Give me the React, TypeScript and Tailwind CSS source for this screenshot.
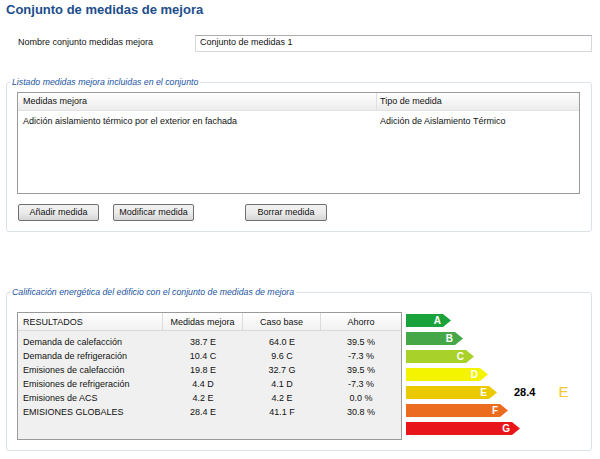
import React from 'react';

const results = [
  { name: 'Demanda de calefacción', mejora: '38.7 E', base: '64.0 E', ahorro: '39.5 %' },
  { name: 'Demanda de refrigeración', mejora: '10.4 C', base: '9.6 C', ahorro: '-7.3 %' },
  { name: 'Emisiones de calefacción', mejora: '19.8 E', base: '32.7 G', ahorro: '39.5 %' },
  { name: 'Emisiones de refrigeración', mejora: '4.4 D', base: '4.1 D', ahorro: '-7.3 %' },
  { name: 'Emisiones de ACS', mejora: '4.2 E', base: '4.2 E', ahorro: '0.0 %' },
  { name: 'EMISIONES GLOBALES', mejora: '28.4 E', base: '41.1 F', ahorro: '30.8 %' },
];

const bars = [
  { letter: 'A', width: 'w-[45px]', color: 'bg-[#1ba33b]' },
  { letter: 'B', width: 'w-[57px]', color: 'bg-[#45a748]' },
  { letter: 'C', width: 'w-[68px]', color: 'bg-[#a8d22a]' },
  { letter: 'D', width: 'w-[82px]', color: 'bg-[#f4f300]' },
  { letter: 'E', width: 'w-[91px]', color: 'bg-[#ebc900]' },
  { letter: 'F', width: 'w-[102px]', color: 'bg-[#ec6c1f]' },
  { letter: 'G', width: 'w-[114px]', color: 'bg-[#e8151b]' },
];

const WinButton: React.FC<{ label: string; className?: string }> = ({ label, className = '' }) => (
  <button
    className={`h-[17px] rounded-[2px] border border-[#707070] bg-gradient-to-b from-[#f2f2f2] via-[#ebebeb] to-[#d6d6d6] text-[9px] text-[#111] leading-none ${className}`}
  >
    {label}
  </button>
);

export default function App() {
  return (
    <div className="w-[600px] h-[459px] bg-white overflow-hidden font-['Liberation_Sans',Arial,sans-serif] text-[9px] text-[#111]">
      {/* Título */}
      <h1 className="pl-[6px] pt-[2px] text-[13px] leading-[16px] font-bold text-[#1d4d8c]">
        Conjunto de medidas de mejora
      </h1>

      {/* Nombre del conjunto */}
      <div className="mt-[16px] flex items-center h-[18px]">
        <span className="pl-[18px] w-[195px]">Nombre conjunto medidas mejora</span>
        <div className="w-[397px] h-[17px] border border-[#d6d9dc] border-t-[#abadb3] flex items-center pl-[4px]">
          Conjunto de medidas 1
        </div>
      </div>

      {/* Listado medidas */}
      <fieldset className="ml-[6px] mt-[24px] w-[586px] border border-[#dae2e8] rounded-[3px] pl-[10px] pr-[11px] pb-[10px]">
        <legend className="-ml-[7px] px-[2px] italic text-[8.75px] text-[#2355a3] leading-[12px]">
          Listado medidas mejora incluidas en el conjunto
        </legend>
        <div className="mt-[4px] h-[102px] border border-[#9a9a9a] bg-white">
          <div className="h-[18px] flex bg-gradient-to-b from-white to-[#ececec] border-b border-[#e2e2e2]">
            <span className="w-[359px] pl-[5px] pt-[1px] border-r border-[#e0e0e0] flex items-center">Medidas mejora</span>
            <span className="pl-[3px] pt-[1px] flex items-center">Tipo de medida</span>
          </div>
          <div className="h-[20px] pt-[1px] flex items-center">
            <span className="w-[359px] pl-[5px]">Adición aislamiento térmico por el exterior en fachada</span>
            <span className="pl-[3px]">Adición de Aislamiento Térmico</span>
          </div>
        </div>
        <div className="mt-[10px] flex">
          <WinButton label="Añadir medida" className="ml-[1px] w-[81px]" />
          <WinButton label="Modificar medida" className="ml-[14px] w-[81px]" />
          <WinButton label="Borrar medida" className="ml-[51px] w-[82px]" />
        </div>
      </fieldset>

      {/* Calificación energética */}
      <fieldset className="ml-[6px] mt-[54px] w-[586px] border border-[#dae2e8] rounded-[3px] pl-[10px] pr-[11px] pb-[10px]">
        <legend className="-ml-[7px] px-[2px] italic text-[8.75px] text-[#2355a3] leading-[12px]">
          Calificación energética del edificio con el conjunto de medidas de mejora
        </legend>
        <div className="mt-[14px] flex">
          <div className="w-[385px] h-[128px] border border-[#9a9a9a] bg-[#f0f0f0]">
            <div className="grid grid-cols-[145px_80px_78px_80px] h-[18px] bg-gradient-to-b from-white to-[#f1f1f1] border-b border-[#d9d9d9]">
              <span className="pl-[5px] pt-[2px] flex items-center border-r border-[#dcdcdc]">RESULTADOS</span>
              <span className="pt-[2px] flex items-center justify-center border-r border-[#dcdcdc]">Medidas mejora</span>
              <span className="pt-[2px] flex items-center justify-center border-r border-[#dcdcdc]">Caso base</span>
              <span className="pt-[2px] flex items-center justify-center">Ahorro</span>
            </div>
            <div className="pt-[5px]">
              {results.map((r) => (
                <div key={r.name} className="grid grid-cols-[145px_80px_78px_80px] h-[14px] items-center">
                  <span className="pl-[5px]">{r.name}</span>
                  <span className="text-center">{r.mejora}</span>
                  <span className="text-center">{r.base}</span>
                  <span className="text-center">{r.ahorro}</span>
                </div>
              ))}
            </div>
          </div>

          <div className="ml-[4px] mt-[2px] flex flex-col gap-[5px]">
            {bars.map((b) => (
              <div key={b.letter} className="flex items-center h-[13px]">
                <div
                  className={`${b.width} ${b.color} h-[13px] flex items-center justify-end pr-[10px] text-white font-bold text-[10px] [clip-path:polygon(0_0,calc(100%-8px)_0,100%_50%,calc(100%-8px)_100%,0_100%)]`}
                >
                  {b.letter}
                </div>
                {b.letter === 'E' && (
                  <>
                    <span className="ml-[17px] font-bold text-[11px] text-black">28.4</span>
                    <span className="ml-[23px] text-[15px] text-[#f2c531]">E</span>
                  </>
                )}
              </div>
            ))}
          </div>
        </div>
      </fieldset>
    </div>
  );
}
